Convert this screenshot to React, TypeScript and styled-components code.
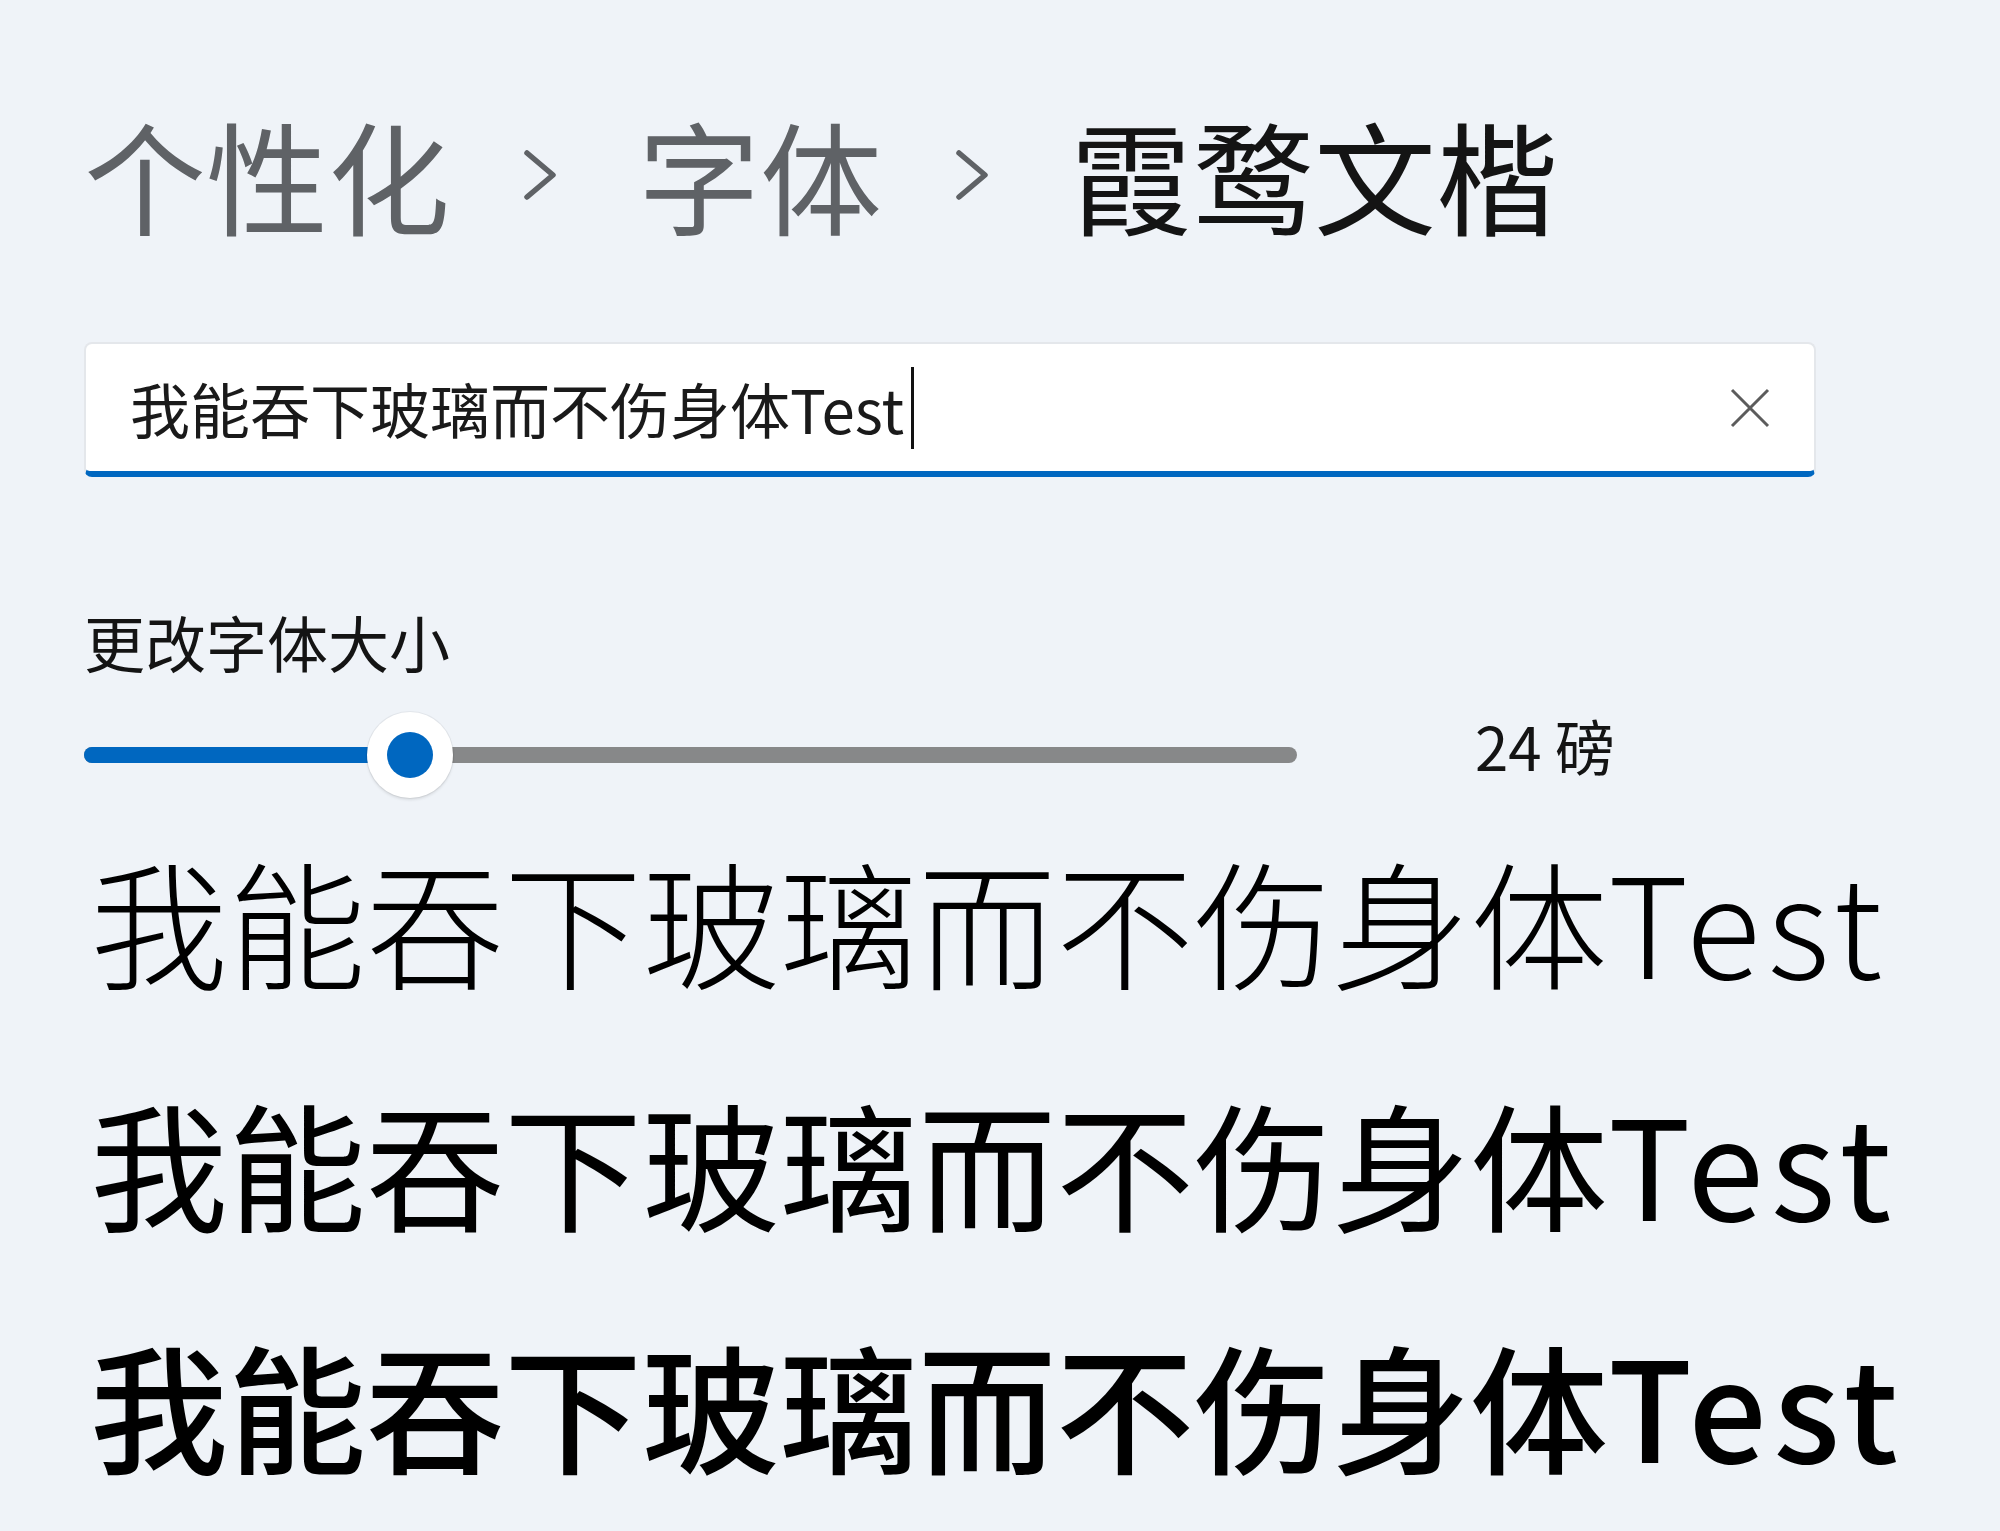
import React from "react";
import styled, { createGlobalStyle } from "styled-components";

const GlobalStyle = createGlobalStyle`
  html, body { margin: 0; padding: 0; background: #eff3f8; }
  #root { min-height: 100vh; }
`;

const Page = styled.main`
  box-sizing: border-box;
  min-height: 100vh;
  background: #eff3f8;
  padding: 111px 0 0 84px;
  display: flex;
  flex-direction: column;
  align-items: flex-start;
  font-family: "Noto Sans CJK SC", "Noto Sans", sans-serif;
  color: #1b1b1b;
`;

const Breadcrumb = styled.nav`
  display: flex;
  align-items: center;
  font-size: 122px;
  line-height: 1;
  height: 124px;
`;

const Crumb = styled.span<{ $current?: boolean }>`
  color: ${(p) => (p.$current ? "#141414" : "#5f6266")};
  font-weight: 400;
  white-space: nowrap;
`;

const ChevronIcon = styled.svg`
  width: 36px;
  height: 52px;
  flex: none;
  margin: 4px 80px 0 72px;
  color: #5f6266;
`;

const SearchBox = styled.div`
  box-sizing: border-box;
  margin-top: 107px;
  width: 1732px;
  height: 135px;
  display: flex;
  align-items: center;
  padding: 0 44px 0 44px;
  background: #ffffff;
  border: 2px solid #e4e7eb;
  border-bottom: 6px solid #0067c0;
  border-radius: 8px;
`;

const SearchText = styled.span`
  font-size: 60px;
  line-height: 1;
  color: #1a1a1a;
  white-space: nowrap;
`;

const Caret = styled.span`
  display: inline-block;
  width: 3px;
  height: 82px;
  margin-left: 7px;
  background: #111;
  flex: none;
`;

const Spacer = styled.div`
  flex: 1;
`;

const ClearIcon = styled.svg`
  width: 40px;
  height: 40px;
  flex: none;
  color: #5c5c5c;
`;

const Label = styled.div`
  margin-top: 134px;
  font-size: 61px;
  line-height: 1;
  color: #141414;
`;

const SliderRow = styled.div`
  margin-top: 40px;
  height: 86px;
  display: flex;
  align-items: center;
  gap: 178px;
`;

const Track = styled.div`
  position: relative;
  width: 1213px;
  height: 16px;
  border-radius: 8px;
  background: #878889;
`;

const Fill = styled.div`
  height: 100%;
  border-radius: 8px 0 0 8px;
  background: #0067c0;
`;

const Thumb = styled.div`
  position: absolute;
  top: 50%;
  width: 86px;
  height: 86px;
  margin-left: -43px;
  margin-top: -43px;
  border-radius: 50%;
  background: #ffffff;
  box-shadow: 0 0 0 1px rgba(0, 0, 0, 0.05), 0 2px 3px rgba(0, 0, 0, 0.1);
  display: flex;
  align-items: center;
  justify-content: center;
`;

const ThumbDot = styled.div`
  width: 46px;
  height: 46px;
  border-radius: 50%;
  background: #0067c0;
`;

const Value = styled.div`
  font-size: 60px;
  line-height: 1;
  color: #141414;
  padding-bottom: 20px;
  white-space: nowrap;
`;

const PreviewList = styled.div`
  display: flex;
  flex-direction: column;
  padding-left: 6px;
`;

const Preview = styled.div<{ $weight: number }>`
  font-size: 138px;
  line-height: 242px;
  font-weight: ${(p) => p.$weight};
  color: #000;
  white-space: nowrap;
`;

const Latin = styled.span`
  letter-spacing: 0.05em;
`;

const Chevron = () => (
  <ChevronIcon viewBox="0 0 36 52" aria-hidden>
    <path d="M5 4 L31 26 L5 48" fill="none" stroke="currentColor" strokeWidth="5.5" strokeLinecap="round" strokeLinejoin="round" />
  </ChevronIcon>
);

const SAMPLE_CJK = "我能吞下玻璃而不伤身体";
const SAMPLE_LATIN = "Test";
const MIN = 1;
const MAX = 100;
const SIZE = 24;

export default function App() {
  const pct = 26.9;
  return (
    <>
      <GlobalStyle />
      <Page>
        <Breadcrumb>
          <Crumb>个性化</Crumb>
          <Chevron />
          <Crumb>字体</Crumb>
          <Chevron />
          <Crumb $current>霞鹜文楷</Crumb>
        </Breadcrumb>

        <SearchBox>
          <SearchText>{SAMPLE_CJK + SAMPLE_LATIN}</SearchText>
          <Caret />
          <Spacer />
          <ClearIcon viewBox="0 0 40 40" aria-hidden>
            <path d="M2 2 L38 38 M38 2 L2 38" fill="none" stroke="currentColor" strokeWidth="3" />
          </ClearIcon>
        </SearchBox>

        <Label>更改字体大小</Label>
        <SliderRow>
          <Track role="slider" aria-valuemin={MIN} aria-valuemax={MAX} aria-valuenow={SIZE}>
            <Fill style={{ width: `${pct}%` }} />
            <Thumb style={{ left: `${pct}%` }}>
              <ThumbDot />
            </Thumb>
          </Track>
          <Value>{SIZE} 磅</Value>
        </SliderRow>

        <PreviewList>
          {[300, 400, 500].map((w) => (
            <Preview key={w} $weight={w}>
              {SAMPLE_CJK}
              <Latin>{SAMPLE_LATIN}</Latin>
            </Preview>
          ))}
        </PreviewList>
      </Page>
    </>
  );
}
